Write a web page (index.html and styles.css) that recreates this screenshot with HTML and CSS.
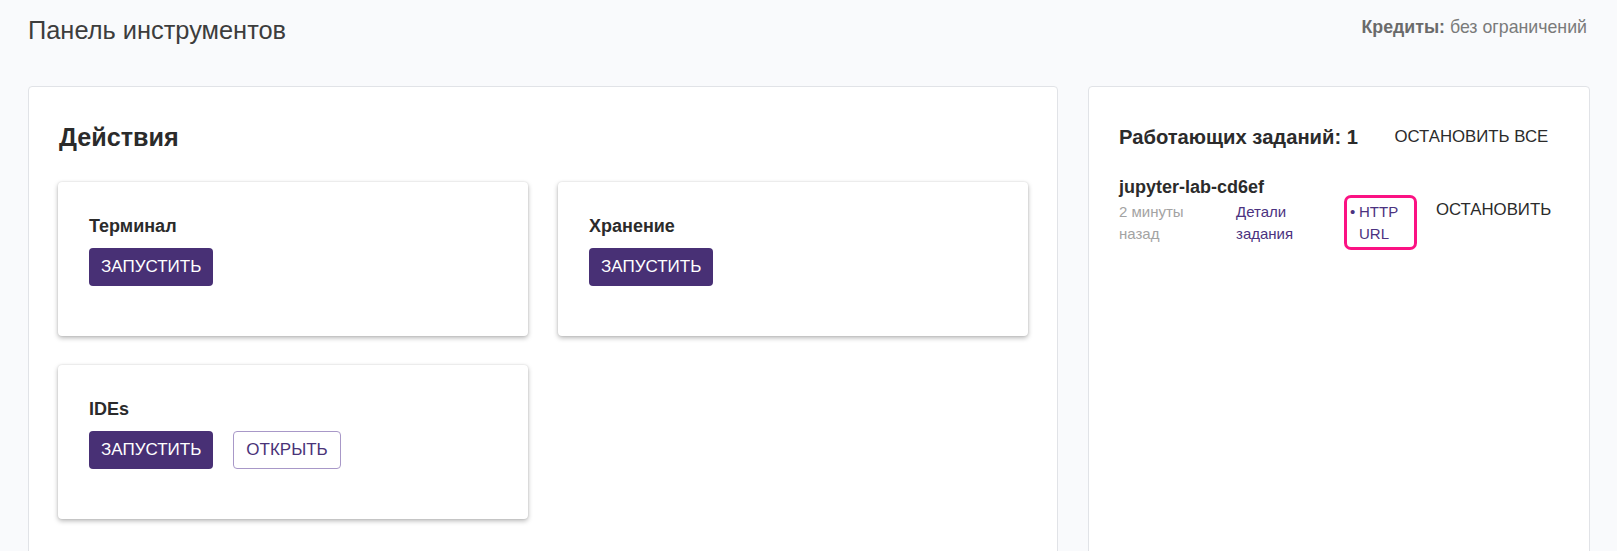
FILE: index.html
```html
<!DOCTYPE html>
<html lang="ru">
<head>
<meta charset="utf-8">
<title>Панель инструментов</title>
<link rel="stylesheet" href="styles.css">
</head>
<body>
<div class="page">
  <header class="topbar">
    <h1 class="page-title">Панель инструментов</h1>
    <div class="credits"><b>Кредиты:</b> без ограничений</div>
  </header>
  <main class="columns">
    <section class="panel panel-actions">
      <h2 class="panel-title">Действия</h2>
      <div class="action-grid">
        <div class="action-card">
          <h3 class="card-title">Терминал</h3>
          <div class="card-buttons">
            <button class="btn btn-primary">ЗАПУСТИТЬ</button>
          </div>
        </div>
        <div class="action-card">
          <h3 class="card-title">Хранение</h3>
          <div class="card-buttons">
            <button class="btn btn-primary">ЗАПУСТИТЬ</button>
          </div>
        </div>
        <div class="action-card">
          <h3 class="card-title">IDEs</h3>
          <div class="card-buttons">
            <button class="btn btn-primary">ЗАПУСТИТЬ</button>
            <button class="btn btn-outline">ОТКРЫТЬ</button>
          </div>
        </div>
      </div>
    </section>
    <section class="panel panel-jobs">
      <div class="jobs-head">
        <h2 class="jobs-title">Работающих заданий: 1</h2>
        <button class="btn-text btn-stop-all">ОСТАНОВИТЬ ВСЕ</button>
      </div>
      <div class="job">
        <div class="job-name">jupyter-lab-cd6ef</div>
        <div class="job-row">
          <div class="job-time">2 минуты назад</div>
          <div class="job-details"><a class="link" href="#">Детали задания</a></div>
          <div class="job-url"><span class="bullet">•</span><a class="link" href="#">HTTP URL</a></div>
          <button class="btn-text btn-stop">ОСТАНОВИТЬ</button>
        </div>
      </div>
    </section>
  </main>
</div>
</body>
</html>
```

FILE: styles.css
```css
html, body {
  margin: 0;
  padding: 0;
  overflow: hidden;
  background: #f9fafc;
}

body {
  font-family: "Liberation Sans", Arial, sans-serif;
  color: #2b2b2b;
}

.page {
  padding: 15px 30px 0 28px;
}

.topbar {
  display: flex;
  justify-content: space-between;
  align-items: flex-start;
  height: 71px;
}

.page-title {
  margin: 0;
  font-size: 25.4px;
  line-height: 30px;
  font-weight: normal;
  color: #3d3d3d;
}

.credits {
  margin-top: 2px;
  font-size: 17.75px;
  line-height: 21px;
  color: #7a7a7a;
}

.credits b {
  color: #6a6a6a;
}

.columns {
  display: flex;
  gap: 30px;
  align-items: stretch;
}

.panel {
  background: #fff;
  border: 1px solid #e1e3e7;
  border-radius: 4px;
  min-height: 560px;
}

.panel-actions {
  width: 970px;
  padding: 35px 29px 30px 29px;
}

.panel-jobs {
  flex: 1;
  padding: 32px 30px 30px 30px;
}

.panel-title {
  margin: 0 0 30px 1px;
  font-size: 25.2px;
  line-height: 30px;
  font-weight: bold;
  color: #2b2b2b;
}

.action-grid {
  display: grid;
  grid-template-columns: 470px 470px;
  gap: 29px 30px;
}

.action-card {
  background: #fff;
  border-radius: 4px;
  box-shadow: 0 2px 5px rgba(0, 0, 0, 0.28), 0 0 2px rgba(0, 0, 0, 0.12);
  padding: 34px 32px 50px 31px;
  height: 154px;
  box-sizing: border-box;
}

.card-title {
  margin: 0 0 11px 0;
  font-size: 18px;
  line-height: 21px;
  font-weight: bold;
  color: #2b2b2b;
}

.card-buttons {
  display: flex;
  gap: 20px;
}

.btn {
  font-family: "Liberation Sans", Arial, sans-serif;
  font-size: 17px;
  height: 38px;
  padding: 0 12px;
  border-radius: 4px;
  box-sizing: border-box;
  cursor: pointer;
}

.btn-primary {
  background: #483075;
  color: #fff;
  border: 0;
}

.btn-outline {
  background: #fff;
  color: #4a3378;
  border: 1px solid #a898c8;
}

.jobs-head {
  display: flex;
  justify-content: space-between;
  align-items: center;
  height: 36px;
}

.jobs-title {
  margin: 0;
  font-size: 20.2px;
  line-height: 24px;
  font-weight: bold;
  color: #2b2b2b;
}

.btn-text {
  background: none;
  border: 0;
  padding: 0 8px;
  font-family: "Liberation Sans", Arial, sans-serif;
  font-size: 16.8px;
  line-height: 20px;
  color: #2b2b2b;
  cursor: pointer;
}

.btn-stop-all {
  margin-right: 3px;
}

.job {
  margin-top: 21px;
}

.job-name {
  font-size: 18px;
  line-height: 22px;
  font-weight: bold;
  color: #2b2b2b;
}

.job-row {
  display: flex;
  align-items: flex-start;
  margin-top: 3px;
  font-size: 15px;
  line-height: 21.7px;
}

.job-time {
  width: 97px;
  padding-right: 20px;
  color: #a3a3a3;
}

.job-details {
  width: 94px;
  padding-right: 20px;
}

.link {
  color: #4b3280;
  text-decoration: none;
}

.job-url {
  display: flex;
  width: 61px;
  outline: 3px solid #fb1283;
  outline-offset: 3px;
  border-radius: 1px;
}

.bullet {
  width: 9px;
  flex: none;
  color: #4b3280;
}

.job-url .link {
  width: 45px;
}

.btn-stop {
  margin-left: 17px;
  line-height: 18px;
  margin-top: 0;
}
```
